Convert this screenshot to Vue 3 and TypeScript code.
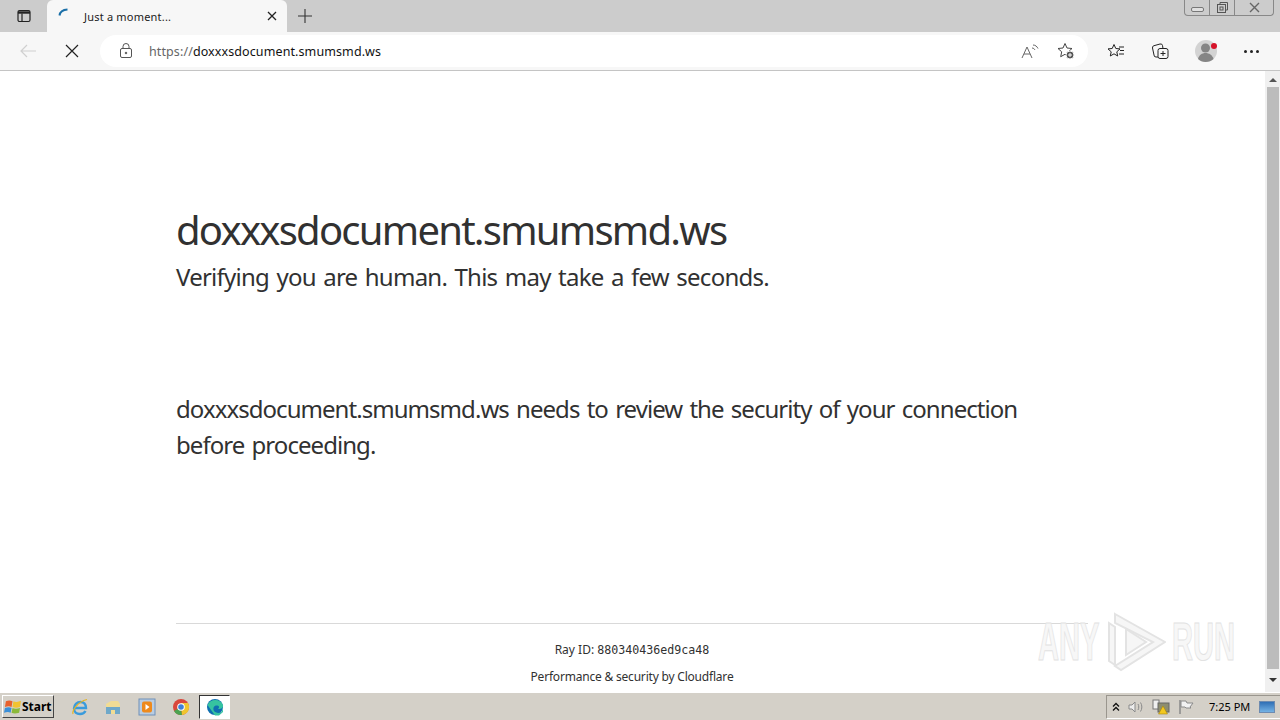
<template>
  <div class="screen">
    <!-- tab strip -->
    <div class="tabstrip">
      <button class="tab-actions">
        <svg width="16" height="16" viewBox="0 0 16 16" fill="none" stroke="#222" stroke-width="1.2">
          <rect x="2" y="2.5" width="12" height="11" rx="1.5" />
          <path d="M2 4.5h12" stroke-width="2.4" />
          <path d="M6 5.5v8" />
        </svg>
      </button>
      <div class="tab">
        <svg class="spinner" width="16" height="16" viewBox="0 0 16 16" fill="none">
          <path d="M2.5 9.5C3 6 5.5 3.8 10.5 3.5" stroke="#1a6fa8" stroke-width="2" />
        </svg>
        <span class="tab-title">Just a moment...</span>
        <svg class="tab-close" width="10" height="10" viewBox="0 0 10 10" stroke="#222" stroke-width="1.3">
          <path d="M1 1l8 8M9 1l-8 8" />
        </svg>
      </div>
      <svg class="new-tab" width="16" height="16" viewBox="0 0 16 16" stroke="#333" stroke-width="1.1">
        <path d="M8 1v14M1 8h14" />
      </svg>
      <div class="win-btns">
        <span class="win-btn min"><i></i></span>
        <span class="win-btn restore">
          <svg width="13" height="13" viewBox="0 0 13 13" fill="none" stroke="#555">
            <rect x="1.5" y="3.5" width="8" height="8" />
            <path d="M4 3V1.5h7.5V9H10" />
            <rect x="4" y="6" width="3" height="3" />
          </svg>
        </span>
        <span class="win-btn close">
          <svg width="13" height="11" viewBox="0 0 13 11" fill="none" stroke="#666" stroke-width="1.4">
            <path d="M2 1l9 9M11 1l-9 9" />
          </svg>
        </span>
      </div>
    </div>

    <!-- toolbar -->
    <div class="toolbar">
      <svg class="back" width="18" height="16" viewBox="0 0 18 16" fill="none" stroke="#d0d0d0" stroke-width="1.2">
        <path d="M17 8H2M8 2L2 8l6 6" />
      </svg>
      <svg class="stop" width="14" height="14" viewBox="0 0 14 14" stroke="#222" stroke-width="1.2">
        <path d="M1 1l12 12M13 1L1 13" />
      </svg>
      <div class="omnibox">
        <svg class="lock" width="14" height="16" viewBox="0 0 14 16" fill="none" stroke="#555">
          <rect x="1.5" y="5.5" width="11" height="9" rx="1.5" />
          <path d="M4 5.5V3.500a3 3 0 0 1 6 0v2" />
          <circle cx="7" cy="10" r=".8" fill="#555" />
        </svg>
        <span class="url"><span class="scheme">https://</span>doxxxsdocument.smumsmd.ws</span>
        <svg class="read" width="18" height="16" viewBox="0 0 18 16" fill="none" stroke="#666">
          <path d="M1 15L6 4l5 11M3 11h6" />
          <path d="M11 5c1.500 0 2.500 1 3 2M12 2c2.500 0 4 1.500 5 3.500" />
        </svg>
        <svg class="fav-add" width="18" height="18" viewBox="0 0 18 18" fill="none" stroke="#444">
          <path d="M8 1.500l2 4.500 5 .5-3.700 3.300 1 4.900L8 12.300l-4.300 2.400 1-4.900L1 6.500l5-.5z" />
          <circle cx="13" cy="13" r="4" fill="#555" stroke="#f7f7f7" />
          <path d="M13 11v4M11 13h4" stroke="#fff" />
        </svg>
      </div>
      <svg class="tool fav" width="18" height="16" viewBox="0 0 18 16" fill="none" stroke="#222">
        <path d="M7 1.500l1.800 4 4.200.4-3.200 2.900.9 4.200L7 10.800l-3.700 2.200.9-4.200L1 5.900l4.200-.4z" />
        <path d="M12 4h5M13 7.500h4M12 11h5" />
      </svg>
      <svg class="tool coll" width="18" height="18" viewBox="0 0 18 18" fill="none" stroke="#222">
        <rect x="7" y="6.500" width="10" height="10" rx="2" />
        <path d="M12 9v5M9.500 11.500h5" />
        <path d="M7 15H5a2 2 0 0 1-2-2L1.500 6a2 2 0 0 1 1.500-2.300L9 2a2 2 0 0 1 2.500 1.500l.5 3" />
      </svg>
      <div class="avatar">
        <svg width="26" height="26" viewBox="0 0 26 26">
          <circle cx="12" cy="13" r="11" fill="#d3d3d3" />
          <circle cx="11.500" cy="10" r="4.500" fill="#858585" />
          <path d="M4 21c1-4 4-6 7.500-6s7 2 8 6c-2 2-5 3-8 3s-5.500-1-7.500-3z" fill="#858585" />
          <circle cx="20" cy="8" r="3" fill="#d6132a" />
        </svg>
      </div>
      <span class="more"><i></i><i></i><i></i></span>
    </div>

    <!-- page -->
    <div class="viewport">
      <main class="page">
        <h1 class="host">doxxxsdocument.smumsmd.ws</h1>
        <h2 class="verify">Verifying you are human. This may take a few seconds.</h2>
        <p class="review">doxxxsdocument.smumsmd.ws needs to review the security of your connection before proceeding.</p>
        <footer class="foot">
          <div class="ray">Ray ID: <code>880340436ed9ca48</code></div>
          <div class="perf">Performance &amp; security by Cloudflare</div>
        </footer>
      </main>
      <div class="scrollbar">
        <span class="arrow up"></span>
        <span class="thumb"></span>
        <span class="arrow down"></span>
      </div>
      <div class="watermark">
        <span>ANY</span>
        <svg width="60" height="64" viewBox="0 3 60 58" fill="#f6f6f6" stroke="#e3e3e3" stroke-width="2">
          <path d="M3 13v38l6 4V17zM9 4l50 28-44 28-6-4 38-24L9 13z" />
          <path d="M20 19v26l20-13z" />
        </svg>
        <span>RUN</span>
      </div>
    </div>

    <!-- taskbar -->
    <div class="taskbar">
      <button class="start">
        <svg width="17" height="16" viewBox="0 0 18 16">
          <path d="M2 2c3-1.500 5-1 7 0L8 8C6 7 4 7 1 8z" fill="#e8612c" />
          <path d="M10 2c2 1 5 1 8-.5L17 8c-3 1-5 1-8 0z" fill="#f2c230" />
          <path d="M1 9c3-1 5-1 7 0l-1 5c-2-1-4-1-7 0z" fill="#3b8fd8" />
          <path d="M9 9c2 1 5 1 8 0l-1 5c-3 1-6 1-8 0z" fill="#8cb93a" />
        </svg>
        <span>Start</span>
      </button>
      <div class="apps">
        <span class="app">
          <svg width="18" height="18" viewBox="0 0 18 18" fill="none">
            <path d="M4 10h11c0-4-2-6-5.500-6S3 7 3 10.500 5.500 16 9 16c2.500 0 4.500-1 5.500-3" stroke="#3a9bdc" stroke-width="2.400" />
            <path d="M2 16C1 13 6 4 16 1.500" stroke="#e6b422" stroke-width="1.200" />
          </svg>
        </span>
        <span class="app">
          <svg width="18" height="18" viewBox="0 0 18 18">
            <path d="M2 6l5-3h7l2 3v10H2z" fill="#f1dc94" />
            <path d="M2 9h14v7H11v-4H7v4H2z" fill="#6fa8c9" />
          </svg>
        </span>
        <span class="app">
          <svg width="18" height="18" viewBox="0 0 18 18">
            <rect x="1" y="1" width="16" height="16" fill="#b9cde2" stroke="#6f8fb8" />
            <rect x="4" y="3.500" width="10" height="11" rx="2" fill="#ee8a1d" />
            <path d="M7.500 6l4 3-4 3z" fill="#fff" />
          </svg>
        </span>
        <span class="app">
          <svg width="18" height="18" viewBox="0 0 18 18">
            <circle cx="9" cy="9" r="8" fill="#d9463b" />
            <path d="M9 9L2 13a8 8 0 0 0 8 4z" fill="#4aa350" />
            <path d="M9 5h7a8 8 0 0 1-6 12z" fill="#f0c52e" />
            <circle cx="9" cy="9" r="3.800" fill="#fff" />
            <circle cx="9" cy="9" r="2.800" fill="#3f7fd8" />
          </svg>
        </span>
        <span class="app active">
          <svg width="18" height="18" viewBox="0 0 18 18">
            <circle cx="9" cy="9" r="8" fill="#0f6fb0" />
            <path d="M1.500 7C4 1 14 0 17 7c.6 3-2.500 4.500-5 4 1.500-1 1.500-3-.5-3.500C8 7 6.500 10 8 13c1 1.500 4 2.500 7 1.500L17 11v3l-4 3.500H9z" fill="#36c3a0" />
          </svg>
        </span>
      </div>
      <div class="tray">
        <svg width="8" height="10" viewBox="0 0 8 10" fill="none" stroke="#111" stroke-width="1.300">
          <path d="M1 4.500L4 1.500l3 3M1 8.500l3-3 3 3" />
        </svg>
        <svg width="16" height="16" viewBox="0 0 16 16" fill="none" stroke="#8a8a8a">
          <path d="M1 6h3l3-3v10l-3-3H1z" fill="#ececec" />
          <path d="M10 5c1 1.500 1 4.500 0 6M12.500 3.500c1.800 2.500 1.800 6.500 0 9" />
        </svg>
        <svg width="18" height="16" viewBox="0 0 18 16">
          <rect x="1" y="1" width="6" height="9" fill="#f0f0f0" stroke="#777" />
          <rect x="6" y="4" width="11" height="9" fill="#8d8d70" stroke="#666" />
          <path d="M11 7l4.500 8h-9z" fill="#f3c81f" stroke="#a5840b" stroke-width=".6" />
        </svg>
        <svg width="17" height="16" viewBox="0 0 17 16" fill="none" stroke="#8a8a8a">
          <path d="M2 1v14" stroke-width="1.500" />
          <path d="M3 2h5l1 2h6l-3 4 1 1H8L7 8H3z" fill="#f2f2f2" />
        </svg>
        <span class="clock">7:25 PM</span>
        <span class="show-desktop"></span>
      </div>
    </div>
  </div>
</template>

<script setup lang="ts">
</script>

<style>
html, body { margin: 0; overflow: hidden; }
</style>

<style scoped>
.screen { width: 1280px; height: 720px; display: flex; flex-direction: column; font-family: "Noto Sans", sans-serif; background: #fff; overflow: hidden; }

.tabstrip { height: 32px; flex: none; background: #cccccc; display: flex; align-items: flex-end; position: relative; }
.tab-actions { width: 47px; height: 32px; border: none; background: none; padding: 0; display: flex; align-items: center; justify-content: center; }
.tab { width: 240px; height: 32px; background: #f7f7f7; border-radius: 6px 6px 0 0; display: flex; align-items: center; box-sizing: border-box; padding: 0 10px; }
.spinner { margin-bottom: 4px; }
.tab-title { font-size: 11px; letter-spacing: .2px; color: #222; margin-left: 11px; flex: 1; }
.new-tab { margin: 0 0 8px 10px; }
.win-btns { position: absolute; top: 0; right: 6px; width: 90px; height: 16px; display: flex; border: 1px solid #888; border-top: none; border-radius: 0 0 4px 4px; box-sizing: border-box; }
.win-btn { display: flex; align-items: center; justify-content: center; border-right: 1px solid #888; width: 24px; height: 15px; }
.win-btn.close { border-right: none; flex: 1; }
.win-btn.min i { width: 11px; height: 3px; border: 1px solid #777; border-radius: 2px; background: #e0e0e0; margin-top: 3px; }

.toolbar { height: 38px; flex: none; background: #f7f7f7; border-bottom: 1px solid #c4c4c4; display: flex; align-items: center; box-sizing: content-box; }
.back { margin-left: 19px; }
.stop { margin-left: 28px; }
.omnibox { margin-left: 21px; width: 988px; height: 32px; background: #fff; border-radius: 16px; display: flex; align-items: center; box-sizing: border-box; }
.lock { margin-left: 19px; }
.url { margin-left: 16px; font-size: 12.5px; letter-spacing: .1px; color: #111; flex: 1; }
.scheme { color: #666; }
.read { margin-right: 18px; }
.fav-add { margin-right: 13px; }
.fav { margin-left: 19px; }
.coll { margin-left: 26px; }
.avatar { margin-left: 25px; width: 26px; height: 26px; }
.more { margin-left: 24px; display: flex; gap: 3px; }
.more i { width: 3px; height: 3px; border-radius: 50%; background: #222; }

.viewport { flex: 1; min-height: 0; display: flex; position: relative; }
.page { flex: 1; box-sizing: border-box; padding: 134px 177px 0 176px; color: #313131; }
.host { margin: 0; font-size: 40px; line-height: 50px; font-weight: 400; letter-spacing: -1.76px; }
.verify { margin: 4px 0 0; font-size: 24px; line-height: 36px; font-weight: 400; letter-spacing: -.75px; word-spacing: 1.9px; }
.review { margin: 96px 0 0; font-size: 24px; line-height: 36px; letter-spacing: -.95px; word-spacing: 1.9px; }
.foot { margin-top: 160px; border-top: 1px solid #d9d9d9; text-align: center; font-size: 12px; color: #313131; }
.ray { margin-top: 17px; }
.ray code { font-family: "DejaVu Sans Mono", monospace; font-size: 11.65px; }
.perf { margin-top: 10px; letter-spacing: -.2px; }

.scrollbar { width: 15px; flex: none; background: #f0f0f0; display: flex; flex-direction: column; align-items: center; }
.thumb { flex: 1; width: 12px; background: #bcbcbc; }
.arrow { width: 0; height: 0; border-left: 4px solid transparent; border-right: 4px solid transparent; }
.arrow.up { border-bottom: 4px solid #555; margin: 7px 0 5px; }
.arrow.down { border-top: 4px solid #333; margin: 9px 0 10px; }

.watermark { position: absolute; left: 1038px; top: 539px; display: flex; align-items: center; gap: 6px; pointer-events: none; }
.watermark span { font-family: "Liberation Sans", sans-serif; font-size: 53px; line-height: 60px; font-weight: 700; color: #f7f7f7; -webkit-text-stroke: 1px #e2e2e2; transform: scaleX(.55); transform-origin: left center; display: inline-block; width: 62px; white-space: nowrap; }

.taskbar { height: 28px; flex: none; background: #d4d0c8; border-top: 1px solid #fff; box-sizing: border-box; display: flex; align-items: center; }
.start { margin-left: 2px; width: 52px; height: 23px; padding: 0 0 0 1px; background: #d4d0c8; border: 1px solid #444; border-top-color: #fff; border-left-color: #fff; display: flex; align-items: center; gap: 1px; font-family: "Noto Sans", sans-serif; font-weight: 700; font-size: 12px; color: #000; box-sizing: border-box; }
.apps { margin-left: 12px; display: flex; gap: 6.75px; align-items: center; }
.app { width: 27px; height: 24px; display: flex; align-items: center; justify-content: center; }
.app.active { width: 31px; background: #fff; border: 1px solid #333; border-right-color: #fff; border-bottom-color: #fff; box-sizing: border-box; margin-left: -2px; }
.tray { margin-left: auto; width: 174px; height: 24px; box-sizing: border-box; border: 1px solid #9a968e; border-right: none; border-bottom-color: #fff; display: flex; align-items: center; gap: 8px; padding-left: 5px; }
.clock { font-size: 11px; color: #000; margin-left: 6px; white-space: nowrap; }
.show-desktop { width: 14px; height: 10px; background: linear-gradient(180deg, #2f6fb5, #74b2e4); border: 1px solid #6d8bb0; margin-left: 1px; }
</style>
